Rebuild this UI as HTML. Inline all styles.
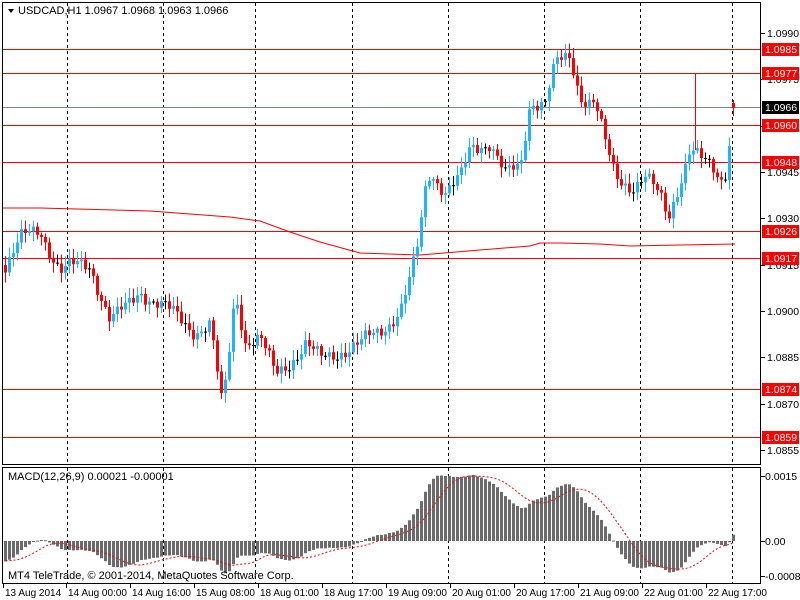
<!DOCTYPE html>
<html><head><meta charset="utf-8">
<style>
html,body{margin:0;padding:0;background:#fff;width:800px;height:600px;overflow:hidden}
svg{display:block}
text{font-family:"Liberation Sans",sans-serif;font-size:11px;fill:#000}
text.b{font-size:10px}
text.r{font-size:10.5px}
line{shape-rendering:crispEdges}
</style></head>
<body>
<svg id="s" width="800" height="600" xmlns="http://www.w3.org/2000/svg">
<rect width="800" height="600" fill="#fff"/>
<g id="grid"></g>
<g id="hl"></g>
<g id="cand"></g>
<g id="macd"></g>
<rect x="2.5" y="2.5" width="758" height="462" fill="none" stroke="#000"/>
<rect x="2.5" y="467.5" width="758" height="116" fill="none" stroke="#000"/>
<path d="M8 9 L14 9 L11 13 Z" fill="#000"/>
<text x="18" y="14">USDCAD,H1  1.0967 1.0968 1.0963 1.0966</text>
<text x="8" y="480">MACD(12,26,9) 0.00021 -0.00001</text>
<text x="8" y="579">MT4 TeleTrade, © 2001-2014, MetaQuotes Software Corp.</text>
<g id="ax"></g>
</svg>
<script>
(function(){
var NS='http://www.w3.org/2000/svg';
function el(p,t,a,txt){var e=document.createElementNS(NS,t);for(var k in a)e.setAttribute(k,a[k]);if(txt)e.textContent=txt;document.getElementById(p).appendChild(e);return e;}
[67,163,255,352,448,544,640,732].forEach(function(gx){
 el('grid','line',{x1:gx+.5,y1:3,x2:gx+.5,y2:465,stroke:'#000','stroke-dasharray':'3,3'});
 el('grid','line',{x1:gx+.5,y1:468,x2:gx+.5,y2:583,stroke:'#000','stroke-dasharray':'3,3'});
});
[49,73,125,162,231,258,389,437].forEach(function(hy){
 el('hl','line',{x1:3,y1:hy+.5,x2:760,y2:hy+.5,stroke:'#ff0000'});
});
el('hl','line',{x1:3,y1:107.5,x2:760,y2:107.5,stroke:'#778899'});
el('hl','polyline',{points:'3,208 40,208 150,211 230,217 260,221 290,232 320,242 360,253 420,255 480,250 530,246 540,243 560,243 600,244 630,246 680,245 735,244',fill:'none',stroke:'#f00'});
[['1.0990',33],['1.0975',79],['1.0960',126],['1.0945',172],['1.0930',218],['1.0915',265],['1.0900',311],['1.0885',357],['1.0870',404],['1.0855',450]].forEach(function(a){
 el('ax','line',{x1:761,y1:a[1]+.5,x2:765,y2:a[1]+.5,stroke:'#000'});
 el('ax','text',{x:767,y:a[1]+4,'class':'r'},a[0]);
});
[['1.0985',49,'#f00'],['1.0977',73,'#f00'],['1.0966',107,'#000'],['1.0960',125,'#f00'],['1.0948',162,'#f00'],['1.0926',231,'#f00'],['1.0917',258,'#f00'],['1.0874',389,'#f00'],['1.0859',437,'#f00']].forEach(function(a){
 el('ax','rect',{x:762,y:a[1]-6,width:37,height:13,fill:a[2]});
 el('ax','text',{x:765,y:a[1]+4,style:'fill:#fff','class':'r'},a[0]);
});
[['0.0015',476],['0.00',541],['-0.00084',576]].forEach(function(a){
 el('ax','line',{x1:761,y1:a[1]+.5,x2:765,y2:a[1]+.5,stroke:'#000'});
 el('ax','text',{x:765,y:a[1]+4,'class':'r'},a[0]);
});
[['13 Aug 2014',3],['14 Aug 00:00',66],['14 Aug 16:00',130],['15 Aug 08:00',194],['18 Aug 01:00',258],['18 Aug 17:00',322],['19 Aug 09:00',386],['20 Aug 01:00',450],['20 Aug 17:00',514],['21 Aug 09:00',578],['22 Aug 01:00',642],['22 Aug 17:00',706]].forEach(function(a){
 el('ax','line',{x1:a[1]+.5,y1:584,x2:a[1]+.5,y2:588,stroke:'#000'});
 el('ax','text',{x:a[1]+2,y:596,'class':'b'},a[0]);
});
var K=[[5,265],[20,240],[40,230],[60,270],[90,265],[110,320],[125,310],[140,290],[160,305],[180,320],[195,330],[210,325],[222,410],[228,360],[235,290],[245,340],[260,340],[275,375],[290,360],[305,345],[320,360],[340,350],[360,345],[380,330],[400,310],[410,280],[418,245],[425,190],[430,170],[445,190],[460,180],[470,150],[490,140],[505,175],[520,170],[530,100],[545,100],[555,65],[570,60],[580,95],[595,100],[605,145],[615,180],[630,185],[645,175],[660,200],[668,220],[675,195],[690,145],[700,160],[710,170],[720,180],[727,180],[731,112],[735,105]];
function interp(px){for(var i=0;i<K.length-1;i++){if(px>=K[i][0]&&px<=K[i+1][0]){var t=(px-K[i][0])/(K[i+1][0]-K[i][0]);return K[i][1]+t*(K[i+1][1]-K[i][1]);}}return K[K.length-1][1];}
var closes=[],prev=265,xs=[];
for(var cx=5;cx<=735;cx+=4){
 var c=interp(cx)+(cx<725?Math.sin(cx*1.7)*7+Math.sin(cx*0.53)*4:0);
 var o=prev;prev=c;closes.push(c);xs.push(cx);
 var tp=Math.min(o,c),bt=Math.max(o,c);
 var hi=tp-2-Math.abs(Math.sin(cx*2.3))*8,lo=bt+2+Math.abs(Math.cos(cx*1.9))*8;
 var col=(c<o)?'#1fb4ff':'#f00';
 if(Math.abs(c-o)<1.2)col='#000';
 if(cx>=733){tp=103;bt=108;hi=100;lo=116;col='#f00';}
 el('cand','line',{x1:cx+.5,y1:hi,x2:cx+.5,y2:lo,stroke:col});
 el('cand','rect',{x:cx-1,y:tp,width:3,height:Math.max(1,bt-tp),fill:col});
}
el('cand','line',{x1:695.5,y1:73,x2:695.5,y2:150,stroke:'#f00'});
function ema(a,n){var k=2/(n+1),r=[],v=a[0];for(var i=0;i<a.length;i++){v=i?a[i]*k+v*(1-k):a[i];r.push(v);}return r;}
var warm=[];for(var w=0;w<40;w++)warm.push(-(190+w*2));
var pr=warm.concat(closes.map(function(v){return -v;}));
var e12=ema(pr,12),e26=ema(pr,26),m=[];for(var i=0;i<pr.length;i++)m.push(e12[i]-e26[i]);
var sig=[];for(var i2=0;i2<m.length;i2++){var s=0,n=0;for(var j=Math.max(0,i2-8);j<=i2;j++){s+=m[j];n++;}sig.push(s/n);}
m=m.slice(40);sig=sig.slice(40);
var mx=0;m.forEach(function(v){if(v>mx)mx=v;});var sc=66/mx;
for(var q=0;q<m.length;q++){var y1=Math.max(470,Math.min(582,541-m[q]*sc));
 el('macd','rect',{x:xs[q]-1,y:Math.min(541,y1),width:3,height:Math.max(1,Math.abs(y1-541)),fill:'#6b6b6b'});}
var pts=[];for(var r=0;r<sig.length;r++)pts.push((xs[r]+.5)+','+Math.max(470,Math.min(582,541-sig[r]*sc)).toFixed(1));
el('macd','polyline',{points:pts.join(' '),fill:'none',stroke:'#f00','stroke-dasharray':'2,2'});
})();
</script>
</body></html>
